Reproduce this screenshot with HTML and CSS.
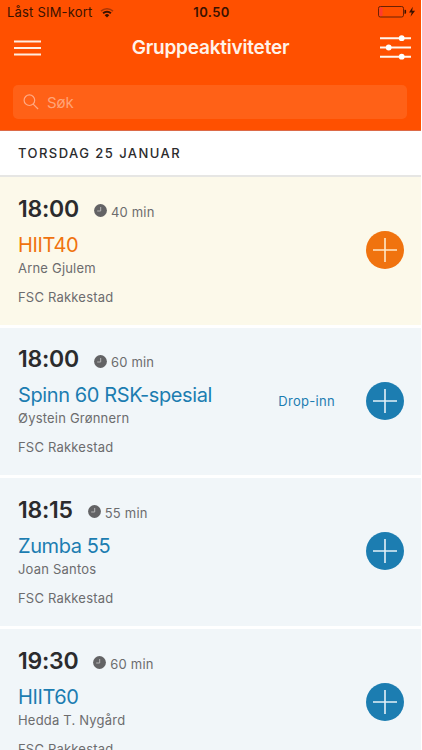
FILE: index.html
```
<!DOCTYPE html>
<html lang="no">
<head>
    <meta charset="UTF-8">
    <meta name="viewport" content="width=device-width, initial-scale=1.0">
    <title>Gruppeaktiviteter</title>
    <link rel="stylesheet" href="styles.css">
</head>
<body>

    <div class="app">
        <header class="header">
            <div class="status-bar">
                <div class="carrier">
                    <span>Låst SIM-kort</span>
                    <svg class="wifi" width="14" height="11" viewBox="0 0 14 11" fill="none" stroke="#3a1200">
                        <path d="M1 4.1a8.6 8.6 0 0 1 12 0" stroke="#a83605" stroke-width="1.5"/>
                        <path d="M3.1 6.3a5.6 5.6 0 0 1 7.8 0" stroke-width="1.9"/>
                        <path d="M7 10.5 4.7 8.2a3.2 3.2 0 0 1 4.6 0z" fill="#3a1200" stroke="none"/>
                    </svg>
                </div>
                <span class="clock">10.50</span>
                <svg class="battery" width="38" height="12" viewBox="0 0 38 12">
                    <rect x=".5" y=".5" width="25" height="10.5" rx="1.8" fill="none" stroke="#6b2104"/>
                    <rect x="1.5" y="1.5" width="3" height="8.5" rx=".8" fill="#ff3b30"/>
                    <path d="M26.5 3.8h.6a1 1 0 0 1 1 1v2a1 1 0 0 1-1 1h-.6z" fill="#3a1200"/>
                    <path d="M34.8.7 31 6.4h2.7l-1.2 4.3 4.6-6h-2.9z" fill="#3a1200"/>
                </svg>
            </div>

            <div class="nav-bar">
                <button class="icon-button" aria-label="Meny">
                    <svg width="27" height="16" viewBox="0 0 27 16" stroke="#ffece0" stroke-width="2">
                        <path d="M0 1.5h27M0 8h27M0 14.5h27"/>
                    </svg>
                </button>
                <h1>Gruppeaktiviteter</h1>
                <button class="icon-button" aria-label="Filter">
                    <svg width="31" height="25" viewBox="0 0 31 25" fill="#fff" stroke="#fff6ee">
                        <path d="M0 3.2h31M0 12.5h31M0 21.7h31" stroke-width="2"/>
                        <g stroke="none">
                            <circle cx="21.7" cy="3.2" r="2.9"/>
                            <circle cx="8.7" cy="12.5" r="2.9"/>
                            <circle cx="21.7" cy="21.7" r="2.9"/>
                        </g>
                    </svg>
                </button>
            </div>

            <label class="search">
                <svg width="16" height="16" viewBox="0 0 16 16" fill="none" stroke="#ffa984" stroke-width="1.2">
                    <circle cx="6.4" cy="6.2" r="5.3"/>
                    <path d="m10.2 10.1 4.9 4.9"/>
                </svg>
                <input type="text" placeholder="Søk">
            </label>
        </header>

        <h2 class="day">TORSDAG 25 JANUAR</h2>

        <ul class="activities" id="activities"></ul>
    </div>

    <script>
        const activities = [
            { time: '18:00', length: 40, name: 'HIIT40', trainer: 'Arne Gjulem', highlight: true },
            { time: '18:00', length: 60, name: 'Spinn 60 RSK-spesial', trainer: 'Øystein Grønnern', note: 'Drop-inn' },
            { time: '18:15', length: 55, name: 'Zumba 55', trainer: 'Joan Santos' },
            { time: '19:30', length: 60, name: 'HIIT60', trainer: 'Hedda T. Nygård' }
        ];

        function activityRow(item) {
            return `
                <li class="activity ${item.highlight ? 'highlight' : ''}">
                    <div class="info">
                        <div class="when">
                            <span class="time">${item.time}</span>
                            <svg width="13" height="13" viewBox="0 0 13 13">
                                <circle cx="6.5" cy="6.5" r="6.4" fill="#636365"/>
                                <path d="M6.7 3v4H3.2" fill="none" stroke="#b5b5b5"/>
                            </svg>
                            <span class="length">${item.length} min</span>
                        </div>
                        <div class="name">${item.name}</div>
                        <div class="trainer">${item.trainer}</div>
                        <div class="place">FSC Rakkestad</div>
                    </div>
                    ${item.note ? `<span class="note">${item.note}</span>` : ''}
                    <button class="add" aria-label="Legg til">
                        <svg width="24" height="24" viewBox="0 0 24 24">
                            <path d="M12 0v24M0 12h24"/>
                        </svg>
                    </button>
                </li>`;
        }

        document.getElementById('activities').innerHTML = activities.map(activityRow).join('');
    </script>
</body>
</html>
```
FILE: styles.css
```
* {
    box-sizing: border-box;
}

body {
    margin: 0;
    font-family: 'Inter', 'Liberation Sans', sans-serif;
    background: #fff;
    color: #2b2b2d;
}

button {
    padding: 0;
    border: none;
    background: none;
    cursor: pointer;
}

svg {
    display: block;
}

.app {
    width: 421px;
    height: 750px;
    overflow: hidden;
}

.header {
    height: 131px;
    background: #ff5000; /* Brand orange */
    border-bottom: 1px solid #dc6a48;
}

.status-bar {
    display: grid;
    grid-template-columns: 1fr auto 1fr;
    align-items: center;
    height: 24px;
    padding: 0 5px 0 7px;
    color: #3a1200;
    font-size: 13px;
}

.carrier {
    display: flex;
    align-items: center;
    gap: 7px;
    letter-spacing: 0.2px;
}

.clock {
    font-weight: 600;
    letter-spacing: 0.4px;
}

.battery {
    justify-self: end;
}

.nav-bar {
    display: flex;
    align-items: center;
    justify-content: space-between;
    height: 47px;
    padding: 0 10px 0 14px;
}

.nav-bar h1 {
    margin: 0;
    color: #fff3ea;
    font-size: 19px;
    font-weight: 600;
    letter-spacing: -0.2px;
}

.search {
    display: flex;
    align-items: center;
    gap: 8px;
    height: 34px;
    margin: 14px 14px 0 13px;
    padding: 0 10px;
    border-radius: 5px;
    background: #ff6117;
}

.search input {
    width: 200px;
    padding: 0;
    border: none;
    outline: none;
    background: none;
    font-family: inherit;
    font-size: 15px;
}

.search input::placeholder {
    color: #ffa478;
}

.day {
    height: 46px;
    margin: 0;
    padding-left: 18px;
    border-bottom: 2px solid #e6e6e4;
    font-size: 13px;
    font-weight: 500;
    line-height: 45px;
    letter-spacing: 1.45px;
}

.activities {
    margin: 0;
    padding: 0;
    list-style: none;
}

.activity {
    display: flex;
    align-items: center;
    height: 150.6px;
    padding: 0 17px 1px 18px;
    border-bottom: 3px solid #fff;
    background: #f1f6f9;
    color: #1c7db1;
}

.activity.highlight {
    background: #fcf9ea; /* Pale yellow */
    color: #f0730f;
}

.info {
    flex: 1;
    padding-bottom: 1px;
}

.when {
    display: flex;
    align-items: center;
    height: 28px;
}

.time {
    margin-right: 15px;
    color: #2b2b2d;
    font-size: 23px;
    font-weight: 600;
    letter-spacing: -0.25px;
}

.when svg {
    margin-top: 4px;
}

.length {
    margin: 6px 0 0 4px;
}

.length,
.trainer,
.place {
    color: #6c6c6e;
    font-size: 13px;
    line-height: 16px;
    letter-spacing: 0.2px;
}

.name {
    margin-top: 9px;
    font-size: 20px;
    line-height: 26px;
    letter-spacing: -0.4px;
}

.trainer {
    margin-top: 2px;
}

.place {
    margin-top: 13px;
}

.note {
    margin-right: 31px;
    font-size: 13px;
    letter-spacing: 0.3px;
}

.add {
    display: flex;
    align-items: center;
    justify-content: center;
    width: 38px;
    height: 38px;
    border-radius: 50%;
    background: #1c7db1;
}

.highlight .add {
    background: #f0730f;
}

.add svg {
    stroke: #e4f1f8;
    stroke-width: 1.6;
}

.highlight .add svg {
    stroke: #ffe9c8;
}
```
